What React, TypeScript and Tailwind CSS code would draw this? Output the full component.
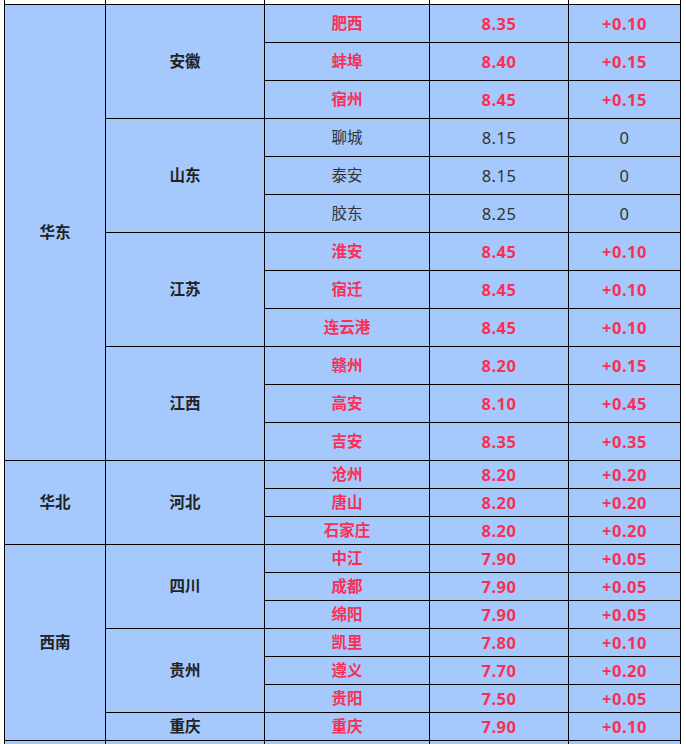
type Row = { city: string; price: string; change: string; up: boolean };
type Prov = { name: string; rows: Row[] };
type Region = { name: string; provs: Prov[] };

const r = (city: string, price: string, change: string): Row => ({
  city,
  price,
  change,
  up: change !== "0",
});

const data: Region[] = [
  {
    name: "华东",
    provs: [
      { name: "安徽", rows: [r("肥西", "8.35", "+0.10"), r("蚌埠", "8.40", "+0.15"), r("宿州", "8.45", "+0.15")] },
      { name: "山东", rows: [r("聊城", "8.15", "0"), r("泰安", "8.15", "0"), r("胶东", "8.25", "0")] },
      { name: "江苏", rows: [r("淮安", "8.45", "+0.10"), r("宿迁", "8.45", "+0.10"), r("连云港", "8.45", "+0.10")] },
      { name: "江西", rows: [r("赣州", "8.20", "+0.15"), r("高安", "8.10", "+0.45"), r("吉安", "8.35", "+0.35")] },
    ],
  },
  {
    name: "华北",
    provs: [{ name: "河北", rows: [r("沧州", "8.20", "+0.20"), r("唐山", "8.20", "+0.20"), r("石家庄", "8.20", "+0.20")] }],
  },
  {
    name: "西南",
    provs: [
      { name: "四川", rows: [r("中江", "7.90", "+0.05"), r("成都", "7.90", "+0.05"), r("绵阳", "7.90", "+0.05")] },
      { name: "贵州", rows: [r("凯里", "7.80", "+0.10"), r("遵义", "7.70", "+0.20"), r("贵阳", "7.50", "+0.05")] },
      { name: "重庆", rows: [r("重庆", "7.90", "+0.10")] },
    ],
  },
];

const regionSpan: Record<number, string> = { 12: "row-span-12", 3: "row-span-3", 7: "row-span-7" };
const provSpan: Record<number, string> = { 3: "row-span-3", 1: "row-span-1" };

const cell = "bg-[#a5c9fc] flex items-center justify-center pt-px";

export default function App() {
  return (
    <div
      className="w-[686px] h-[744px] overflow-hidden bg-white pl-[4px] text-[15.5px]"
      style={{ fontFamily: '"Noto Sans", "Noto Sans CJK SC", sans-serif' }}
    >
      <div className="-mt-[27px] w-[677px] bg-black p-px grid gap-px grid-cols-[100px_158px_164px_138px_111px] grid-rows-[30px_repeat(12,37px)_repeat(10,27px)_40px]">
        {/* header row, cut off above */}
        <div className="bg-white" />
        <div className="bg-white" />
        <div className="bg-white" />
        <div className="bg-white" />
        <div className="bg-white" />

        {data.map((reg) => {
          const total = reg.provs.reduce((n, p) => n + p.rows.length, 0);
          return [
            <div key={reg.name} className={`${cell} ${regionSpan[total]} font-bold text-[#222]`}>
              {reg.name}
            </div>,
            ...reg.provs.map((p) => [
              <div key={reg.name + p.name} className={`${cell} ${provSpan[p.rows.length]} font-bold text-[#222]`}>
                {p.name}
              </div>,
              ...p.rows.map((row) => {
                const tone = row.up ? "text-[#fb2f55] font-bold" : "text-[#333]";
                return [
                  <div key={row.city + "c"} className={`${cell} ${tone}`}>
                    {row.city}
                  </div>,
                  <div key={row.city + "p"} className={`${cell} ${tone} text-[16.5px] tracking-[0.5px]`}>
                    {row.price}
                  </div>,
                  <div key={row.city + "d"} className={`${cell} ${tone} text-[16.5px] tracking-[0.5px]`}>
                    {row.change}
                  </div>,
                ];
              }),
            ]),
          ];
        })}

        {/* next row, cut off below */}
        <div className={cell} />
        <div className={cell} />
        <div className={cell} />
        <div className={cell} />
        <div className={cell} />
      </div>
    </div>
  );
}
